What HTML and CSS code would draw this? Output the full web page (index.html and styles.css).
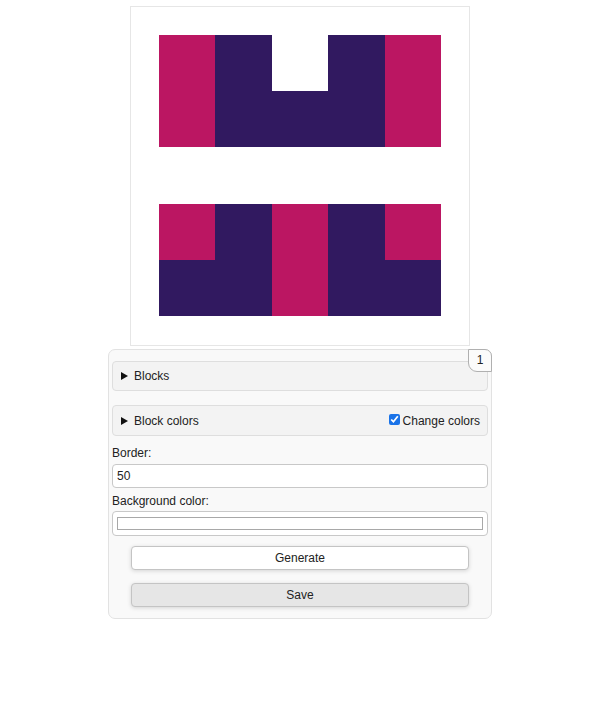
FILE: index.html
```html
<!DOCTYPE html>
<html>
<head>
<meta charset="utf-8">
<link rel="stylesheet" href="styles.css">
</head>
<body>
<div class="page">
  <div class="canvas">
    <svg width="338" height="338" viewBox="0 0 338 338">
      <g shape-rendering="crispEdges">
        <rect x="28" y="28" width="56.4" height="112" fill="#bb1662"/>
        <rect x="84.4" y="28" width="56.4" height="112" fill="#311960"/>
        <rect x="140.8" y="84" width="56.4" height="56" fill="#311960"/>
        <rect x="197.2" y="28" width="56.4" height="112" fill="#311960"/>
        <rect x="253.6" y="28" width="56.4" height="112" fill="#bb1662"/>

        <rect x="28" y="197" width="56.4" height="56" fill="#bb1662"/>
        <rect x="28" y="253" width="56.4" height="56" fill="#311960"/>
        <rect x="84.4" y="197" width="56.4" height="112" fill="#311960"/>
        <rect x="140.8" y="197" width="56.4" height="112" fill="#bb1662"/>
        <rect x="197.2" y="197" width="56.4" height="112" fill="#311960"/>
        <rect x="253.6" y="197" width="56.4" height="56" fill="#bb1662"/>
        <rect x="253.6" y="253" width="56.4" height="56" fill="#311960"/>
      </g>
    </svg>
  </div>

  <div class="panel">
    <div class="badge">1</div>
    <details class="group">
      <summary><span class="sum-text">Blocks</span></summary>
    </details>
    <details class="group">
      <summary><span class="sum-text">Block colors</span><label class="chk"><input type="checkbox" checked>Change colors</label></summary>
    </details>
    <label class="field-label" for="border">Border:</label>
    <input id="border" class="text-input" type="text" value="50">
    <label class="field-label" for="bg">Background color:</label>
    <input id="bg" class="color-input" type="color" value="#ffffff">
    <div class="buttons">
      <button class="btn">Generate</button>
      <button class="btn btn-save">Save</button>
    </div>
  </div>
</div>
</body>
</html>
```

FILE: styles.css
```css
html, body {
  margin: 0;
  padding: 0;
  background: #ffffff;
}

body {
  font-family: "Liberation Sans", Arial, sans-serif;
  font-size: 12px;
  color: #222;
}

.page {
  display: flex;
  flex-direction: column;
  align-items: center;
  padding-top: 6px;
}

.canvas {
  width: 338px;
  height: 338px;
  border: 1px solid #e6e6e6;
  background: #fff;
}

.canvas svg {
  display: block;
}

.panel {
  position: relative;
  box-sizing: border-box;
  width: 384px;
  margin-top: 3px;
  padding: 11px 3px 11px 3px;
  border: 1px solid #e2e2e2;
  border-radius: 7px;
  background: #f9f9f9;
  display: flex;
  flex-direction: column;
}

.badge {
  position: absolute;
  top: -1px;
  right: -1px;
  width: 22px;
  height: 21px;
  border: 1px solid #b0b0b0;
  border-radius: 0 7px 0 9px;
  background: #fbfbfb;
  font-size: 12px;
  line-height: 21px;
  text-align: center;
  color: #222;
}

.group {
  border: 1px solid #dedede;
  border-radius: 4px;
  background: #f3f3f3;
}

.group + .group {
  margin-top: 14px;
}

.group summary {
  display: flex;
  align-items: center;
  height: 28px;
  padding: 0 7px 0 8px;
  cursor: pointer;
  list-style: none;
}

.group + .group summary {
  height: 29px;
}

.group summary::-webkit-details-marker {
  display: none;
}

.group summary::before {
  content: "";
  width: 0;
  height: 0;
  border-top: 4px solid transparent;
  border-bottom: 4px solid transparent;
  border-left: 7px solid #111;
  margin-right: 6px;
}

.sum-text {
  flex: 1;
}

.chk {
  display: flex;
  align-items: center;
}

.chk input {
  width: 11px;
  height: 11px;
  margin: 0 3px 2px 0;
  accent-color: #1a73e8;
}

.field-label {
  margin-top: 10px;
  line-height: 14px;
  color: #222;
}

.text-input {
  box-sizing: border-box;
  margin-top: 4px;
  height: 24px;
  width: 100%;
  padding: 0 4px;
  border: 1px solid #c8c8c8;
  border-radius: 4px;
  background: #fff;
  font-family: "Liberation Sans", Arial, sans-serif;
  font-size: 12px;
  color: #222;
}

.text-input + .field-label {
  margin-top: 6px;
}

.color-input {
  -webkit-appearance: none;
  appearance: none;
  box-sizing: border-box;
  margin: 3px 0 0 0;
  height: 25px;
  width: 100%;
  padding: 5px 4px;
  border: 1px solid #c8c8c8;
  border-radius: 4px;
  background: #fff;
  cursor: pointer;
}

.color-input::-webkit-color-swatch-wrapper {
  padding: 0;
}

.color-input::-webkit-color-swatch {
  border: 1px solid #a8a8a8;
  border-radius: 0;
}

.buttons {
  display: flex;
  flex-direction: column;
  align-items: center;
  gap: 13px;
  margin-top: 10px;
}

.btn {
  box-sizing: border-box;
  width: 338px;
  height: 24px;
  border: 1px solid #c4c4c4;
  border-radius: 4px;
  background: #fff;
  box-shadow: 0 1px 4px rgba(0, 0, 0, 0.15);
  font-family: "Liberation Sans", Arial, sans-serif;
  font-size: 12px;
  color: #222;
  padding: 0;
  cursor: pointer;
}

.btn-save {
  background: #e6e6e6;
}
```
